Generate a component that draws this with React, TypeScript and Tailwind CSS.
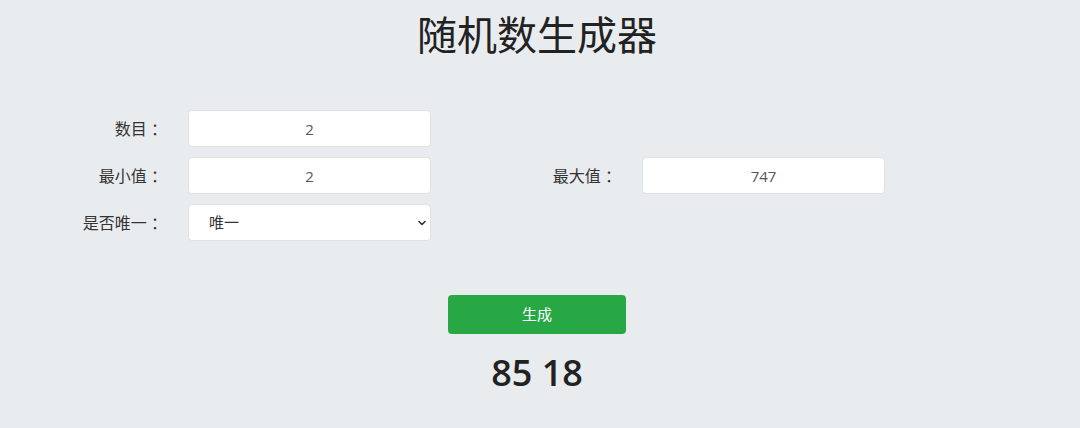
const font = { fontFamily: '"Open Sans", "Noto Sans CJK SC", sans-serif' };

function Field({ label, children }: { label: string; children: React.ReactNode }) {
  return (
    <div className="flex items-center">
      <label className="w-[167px] text-right text-[16px] text-[#333]">{label}</label>
      <div className="ml-[21px] w-[243px]">{children}</div>
    </div>
  );
}

function NumberBox({ value }: { value: string }) {
  return (
    <input
      type="text"
      defaultValue={value}
      className="h-[37px] w-full rounded-[4px] border border-[#dfe2e5] bg-white text-center text-[15px] text-[#555] outline-none"
    />
  );
}

export default function App() {
  return (
    <div className="min-h-[428px] w-[1080px] bg-[#e9ecef] text-[#212529]" style={font}>
      <div className="w-[1074px]">
        <h1 className="pt-[9px] text-center text-[40px] leading-[52px] font-normal text-[#222]">随机数生成器</h1>

        <div className="mt-[49px] grid grid-cols-[454px_454px] gap-y-[10px]">
          <Field label="数目 ：">
            <NumberBox value="2" />
          </Field>
          <div />
          <Field label="最小值 ：">
            <NumberBox value="2" />
          </Field>
          <Field label="最大值 ：">
            <NumberBox value="747" />
          </Field>
          <Field label="是否唯一 ：">
            <div className="relative">
              <select
                defaultValue="unique"
                className="h-[37px] w-full appearance-none rounded-[4px] border border-[#dfe2e5] bg-white pl-[20px] text-[15px] text-[#333] outline-none"
              >
                <option value="unique">唯一</option>
                <option value="repeat">不唯一</option>
              </select>
              <svg
                className="pointer-events-none absolute right-[4px] top-1/2 -translate-y-1/2"
                width="10"
                height="10"
                viewBox="0 0 10 10"
              >
                <path d="M2 3.5 L5 6.5 L8 3.5" fill="none" stroke="#333" strokeWidth="1.6" strokeLinecap="round" strokeLinejoin="round" />
              </svg>
            </div>
          </Field>
        </div>

        <div className="mt-[54px] flex justify-center">
          <button className="h-[39px] w-[178px] rounded-[4px] bg-[#28a745] text-[15px] text-white">生成</button>
        </div>

        <div className="mt-[14px] text-center text-[36px] leading-[50px] font-semibold text-[#222]">85 18</div>
      </div>
    </div>
  );
}
